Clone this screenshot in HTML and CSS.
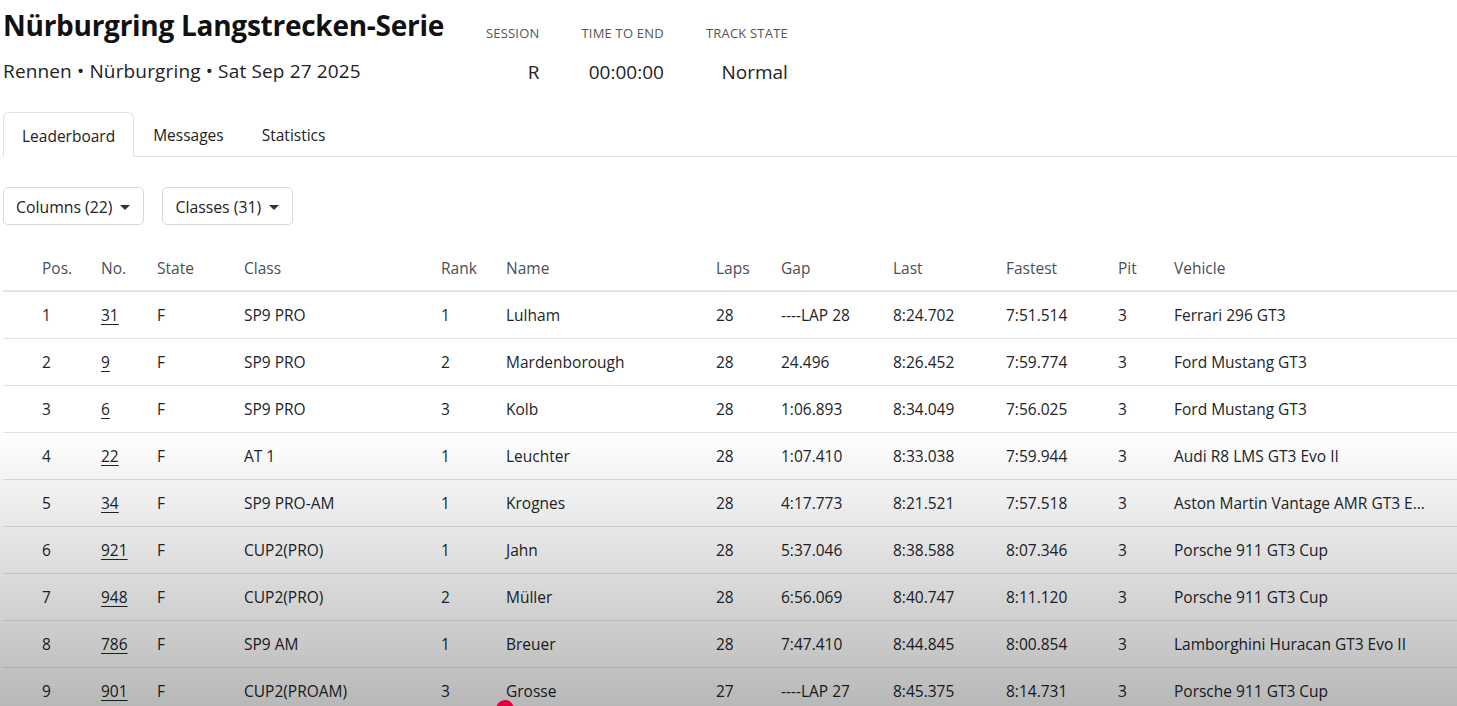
FILE: index.html
```html
<!DOCTYPE html>
<html lang="en">
<head>
<meta charset="utf-8">
<title>Nürburgring Langstrecken-Serie</title>
<link rel="stylesheet" href="styles.css">
</head>
<body>
<div class="page">
  <header class="head">
    <div class="title-block">
      <h1 class="title">Nürburgring Langstrecken-Serie</h1>
      <div class="subtitle">Rennen • Nürburgring • Sat Sep 27 2025</div>
    </div>
    <div class="stats">
      <div class="stat"><div class="stat-label">SESSION</div><div class="stat-value">R</div></div>
      <div class="stat"><div class="stat-label">TIME TO END</div><div class="stat-value">00:00:00</div></div>
      <div class="stat"><div class="stat-label">TRACK STATE</div><div class="stat-value">Normal</div></div>
    </div>
  </header>

  <nav class="tabs">
    <div class="tab active">Leaderboard</div>
    <div class="tab">Messages</div>
    <div class="tab">Statistics</div>
  </nav>

  <div class="toolbar">
    <button class="dd">Columns (22) <span class="caret"></span></button>
    <button class="dd">Classes (31) <span class="caret"></span></button>
  </div>

  <table class="board">
    <colgroup>
      <col class="c-lead"><col class="c-pos"><col class="c-no"><col class="c-state"><col class="c-class"><col class="c-rank"><col class="c-name"><col class="c-laps"><col class="c-gap"><col class="c-last"><col class="c-fast"><col class="c-pit"><col class="c-veh">
    </colgroup>
    <thead>
      <tr><th></th><th>Pos.</th><th>No.</th><th>State</th><th>Class</th><th>Rank</th><th>Name</th><th>Laps</th><th>Gap</th><th>Last</th><th>Fastest</th><th>Pit</th><th>Vehicle</th></tr>
    </thead>
    <tbody>
      <tr><td></td><td>1</td><td><a href="#">31</a></td><td>F</td><td>SP9 PRO</td><td>1</td><td>Lulham</td><td>28</td><td>----LAP 28</td><td>8:24.702</td><td>7:51.514</td><td>3</td><td class="veh">Ferrari 296 GT3</td></tr>
      <tr><td></td><td>2</td><td><a href="#">9</a></td><td>F</td><td>SP9 PRO</td><td>2</td><td>Mardenborough</td><td>28</td><td>24.496</td><td>8:26.452</td><td>7:59.774</td><td>3</td><td class="veh">Ford Mustang GT3</td></tr>
      <tr><td></td><td>3</td><td><a href="#">6</a></td><td>F</td><td>SP9 PRO</td><td>3</td><td>Kolb</td><td>28</td><td>1:06.893</td><td>8:34.049</td><td>7:56.025</td><td>3</td><td class="veh">Ford Mustang GT3</td></tr>
      <tr><td></td><td>4</td><td><a href="#">22</a></td><td>F</td><td>AT 1</td><td>1</td><td>Leuchter</td><td>28</td><td>1:07.410</td><td>8:33.038</td><td>7:59.944</td><td>3</td><td class="veh">Audi R8 LMS GT3 Evo II</td></tr>
      <tr><td></td><td>5</td><td><a href="#">34</a></td><td>F</td><td>SP9 PRO-AM</td><td>1</td><td>Krognes</td><td>28</td><td>4:17.773</td><td>8:21.521</td><td>7:57.518</td><td>3</td><td class="veh">Aston Martin Vantage AMR GT3 Evo</td></tr>
      <tr><td></td><td>6</td><td><a href="#">921</a></td><td>F</td><td>CUP2(PRO)</td><td>1</td><td>Jahn</td><td>28</td><td>5:37.046</td><td>8:38.588</td><td>8:07.346</td><td>3</td><td class="veh">Porsche 911 GT3 Cup</td></tr>
      <tr><td></td><td>7</td><td><a href="#">948</a></td><td>F</td><td>CUP2(PRO)</td><td>2</td><td>Müller</td><td>28</td><td>6:56.069</td><td>8:40.747</td><td>8:11.120</td><td>3</td><td class="veh">Porsche 911 GT3 Cup</td></tr>
      <tr><td></td><td>8</td><td><a href="#">786</a></td><td>F</td><td>SP9 AM</td><td>1</td><td>Breuer</td><td>28</td><td>7:47.410</td><td>8:44.845</td><td>8:00.854</td><td>3</td><td class="veh">Lamborghini Huracan GT3 Evo II</td></tr>
      <tr><td></td><td>9</td><td><a href="#">901</a></td><td>F</td><td>CUP2(PROAM)</td><td>3</td><td>Grosse</td><td>27</td><td>----LAP 27</td><td>8:45.375</td><td>8:14.731</td><td>3</td><td class="veh">Porsche 911 GT3 Cup</td></tr>
    </tbody>
  </table>
</div>
<div class="fade"></div>
<div class="cursor-dot"></div>
</body>
</html>
```

FILE: styles.css
```css
html, body {
  margin: 0;
  padding: 0;
  background: #ffffff;
  overflow: hidden;
  height: 706px;
}
body {
  font-family: "Open Sans", "Noto Sans", sans-serif;
  color: #212529;
}
.page {
  padding-left: 3px;
}

/* header */
.head {
  display: flex;
  align-items: flex-start;
  height: 112px;
}
.title-block {
  display: flex;
  flex-direction: column;
}
.title {
  margin: 0;
  padding-top: 6px;
  font-size: 28px;
  line-height: 38px;
  font-weight: 700;
  letter-spacing: -0.27px;
  color: #111;
}
.subtitle {
  margin-top: 14px;
  font-size: 19px;
  line-height: 26px;
  letter-spacing: 0.15px;
  color: #222;
}
.stats {
  display: flex;
  gap: 42px;
  margin-left: 42px;
  padding-top: 24px;
}
.stat {
  display: flex;
  flex-direction: column;
  align-items: flex-end;
}
.stat-label {
  font-size: 13px;
  line-height: 18px;
  color: #555;
  letter-spacing: 0.2px;
}
.stat-value {
  margin-top: 17px;
  font-size: 19px;
  line-height: 26px;
  color: #222;
}

/* tabs */
.tabs {
  display: flex;
  height: 44px;
  border-bottom: 1px solid #dee2e6;
}
.tab {
  display: flex;
  align-items: center;
  padding: 0 18px 0;
  font-size: 15.5px;
  color: #222;
  border: 1px solid transparent;
  border-bottom: none;
  border-radius: 6px 6px 0 0;
  margin-bottom: -1px;
}
.tab.active {
  border-color: #dee2e6;
  background: #fff;
  height: 45px;
  box-sizing: border-box;
  padding-top: 1px;
}

/* toolbar */
.toolbar {
  display: flex;
  gap: 18px;
  margin-top: 30px;
}
.dd {
  display: flex;
  align-items: center;
  gap: 8px;
  height: 38px;
  padding: 2px 13px 0 12px;
  font-family: inherit;
  font-size: 15.8px;
  color: #222;
  background: #fff;
  border: 1px solid #d6d9dc;
  border-radius: 5px;
}
.caret {
  width: 0;
  height: 0;
  border-left: 5px solid transparent;
  border-right: 5px solid transparent;
  border-top: 5px solid #333;
}

/* table */
.board {
  margin-top: 20px;
  width: 1454px;
  border-collapse: collapse;
  table-layout: fixed;
  font-size: 15.5px;
}
.c-lead { width: 31px; }
.c-pos { width: 59px; }
.c-no { width: 56px; }
.c-state { width: 87px; }
.c-class { width: 197px; }
.c-rank { width: 65px; }
.c-name { width: 210px; }
.c-laps { width: 65px; }
.c-gap { width: 112px; }
.c-last { width: 113px; }
.c-fast { width: 112px; }
.c-pit { width: 56px; }
.c-veh { width: 291px; }

.board th, .board td {
  padding: 0 8px;
  text-align: left;
  white-space: nowrap;
  overflow: hidden;
  text-overflow: ellipsis;
}
.board th {
  height: 45px;
  font-weight: 400;
  color: #4a4f55;
  border-bottom: 2px solid #e2e4e6;
}
.board td {
  height: 46px;
  border-bottom: 1px solid #dee2e6;
  color: #212529;
}
.board td:first-child, .board th:first-child {
  padding: 0;
}
.board td.veh {
  padding-right: 28px;
}
.board a {
  color: #212529;
  text-decoration: underline;
  text-underline-offset: 3px;
}

/* overlays */
.fade {
  position: absolute;
  left: 0;
  right: 0;
  top: 432px;
  height: 274px;
  background: linear-gradient(to bottom, rgba(0,0,0,0) 0%, rgba(0,0,0,0.12) 45%, rgba(0,0,0,0.28) 100%);
  pointer-events: none;
}
.cursor-dot {
  position: absolute;
  left: 496px;
  top: 700px;
  width: 18px;
  height: 18px;
  border-radius: 50%;
  background: #e3003c;
}
```
